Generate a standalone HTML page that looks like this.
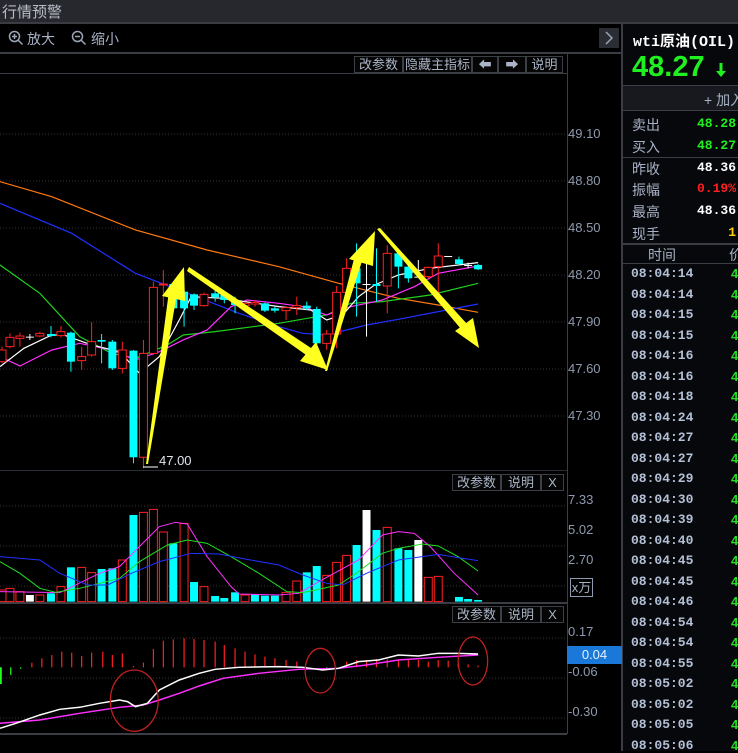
<!DOCTYPE html>
<html><head><meta charset="utf-8"><style>
*{margin:0;padding:0;box-sizing:border-box}
body{width:738px;height:751px;background:#000;overflow:hidden;position:relative;font-family:"Liberation Sans","Noto Sans CJK SC",sans-serif;color:#a8b2c4}
.a{position:absolute;white-space:nowrap}
.btn{position:absolute;height:17px;border:1px solid #3c3f46;font-size:13px;line-height:15px;text-align:center;color:#aab4c6;background:#050505}
.ax{position:absolute;left:568px;font-size:13px;color:#8f9aae}
.rl{position:absolute;left:632px;font-size:14px;color:#a8b2c6}
.rv{position:absolute;right:2px;font-size:13px;font-weight:bold;font-family:"Liberation Mono",monospace}
.t{position:absolute;left:631px;font-size:13px;font-weight:bold;color:#b4c0d6;font-family:"Liberation Mono",monospace;letter-spacing:0px}
.g4{position:absolute;left:731px;font-size:13px;font-weight:bold;color:#20e020}
</style></head><body>
<div class="a" style="left:0;top:0;width:738px;height:22px;background:#27282d"></div>
<div class="a" style="left:2px;top:1px;font-size:15px;color:#b8bcc6">行情预警</div>
<div class="a" style="left:0;top:22px;width:738px;height:2px;background:#3a3c42"></div>
<svg class="a" style="left:8px;top:30px" width="16" height="16" viewBox="0 0 16 16"><circle cx="6.5" cy="6.5" r="5" fill="none" stroke="#9aa4b6" stroke-width="1.5"/><path d="M10 10l4.5 4.5M4 6.5h5M6.5 4v5" stroke="#9aa4b6" stroke-width="1.5"/></svg>
<div class="a" style="left:27px;top:29px;font-size:14px;color:#a8b2c4">放大</div>
<svg class="a" style="left:71px;top:30px" width="16" height="16" viewBox="0 0 16 16"><circle cx="6.5" cy="6.5" r="5" fill="none" stroke="#9aa4b6" stroke-width="1.5"/><path d="M10 10l4.5 4.5M4 6.5h5" stroke="#9aa4b6" stroke-width="1.5"/></svg>
<div class="a" style="left:91px;top:29px;font-size:14px;color:#a8b2c4">缩小</div>
<div class="a" style="left:599px;top:28px;width:20px;height:20px;background:#2a2d33"></div>
<svg class="a" style="left:604px;top:31px" width="10" height="14"><path d="M2 1l6 6-6 6" fill="none" stroke="#9aa4b6" stroke-width="1.5"/></svg>
<div class="a" style="left:0;top:52px;width:622px;height:2px;background:#3a3d44"></div>
<div class="a" style="left:0;top:73px;width:567px;height:1px;background:#3a3d44"></div>
<div class="btn" style="left:354px;top:56px;width:49px">改参数</div>
<div class="btn" style="left:403px;top:56px;width:69px">隐藏主指标</div>
<div class="btn" style="left:472px;top:56px;width:26px">&#x2B05;</div>
<div class="btn" style="left:498px;top:56px;width:28px">&#x27A1;</div>
<div class="btn" style="left:526px;top:56px;width:37px">说明</div>
<div class="a" style="left:567px;top:54px;width:1px;height:680px;background:#3a3d44"></div>
<div class="a" style="left:621px;top:22px;width:2px;height:729px;background:#3a3d44"></div>
<div class="a" style="left:0;top:733px;width:567px;height:2px;background:#3a3d44"></div>
<div class="a" style="left:0;top:602px;width:567px;height:2px;background:#3a3d44"></div>
<div class="a" style="left:0;top:470px;width:567px;height:1px;background:#2a2d33"></div>

<svg class="a" style="left:0;top:0" width="567" height="751">
<g stroke="#333" stroke-dasharray="1,2" stroke-width="1">
<line x1="0" y1="134" x2="567" y2="134"/><line x1="0" y1="181" x2="567" y2="181"/><line x1="0" y1="228" x2="567" y2="228"/><line x1="0" y1="275" x2="567" y2="275"/><line x1="0" y1="322" x2="567" y2="322"/><line x1="0" y1="369" x2="567" y2="369"/><line x1="0" y1="416" x2="567" y2="416"/>
<line x1="0" y1="506" x2="567" y2="506"/><line x1="0" y1="546" x2="567" y2="546"/><line x1="0" y1="586" x2="567" y2="586"/>
<line x1="0" y1="638" x2="567" y2="638"/><line x1="0" y1="678" x2="567" y2="678"/><line x1="0" y1="718" x2="567" y2="718"/>
</g>
<g transform="translate(0,160) scale(0.3984,0.3333)">
<g fill="none" stroke-width="1.2">
<polyline vector-effect="non-scaling-stroke" stroke="#ff7a10" points="0,65 130,110 340,210 520,270 700,320 850,370 1000,415 1100,435 1200,457"/>
<polyline vector-effect="non-scaling-stroke" stroke="#2030ff" points="0,130 180,220 340,340 460,395 600,460 700,500 760,520 820,525 920,495 1000,478 1100,455 1200,432"/>
<polyline vector-effect="non-scaling-stroke" stroke="#20d020" points="0,315 100,400 200,530 280,580 340,595 420,555 460,525 540,515 700,490 820,465 880,430 960,425 1080,405 1200,370"/>
<polyline vector-effect="non-scaling-stroke" stroke="#ff30ff" points="0,590 50,618 130,570 200,550 280,570 340,600 400,575 460,540 520,510 580,440 620,420 700,430 760,440 820,465 880,440 960,420 1040,380 1100,340 1200,318"/>
<polyline vector-effect="non-scaling-stroke" stroke="#fff" points="0,620 60,565 130,525 160,525 230,555 300,575 350,640 400,590 450,480 480,410 560,415 700,440 780,450 820,480 860,465 900,410 940,375 1000,345 1080,325 1150,315 1200,308"/>
</g>
<g id="c"></g>
</g>
<g transform="translate(0,460) scale(0.3984,0.3333)">
<g id="v"></g>
<g fill="none">
<polyline vector-effect="non-scaling-stroke" stroke="#ff30ff" points="0,395 150,398 250,340 300,320 350,260 400,200 440,187 470,192 520,290 580,380 600,402 700,405 750,400 800,365 900,300 960,225 1000,215 1040,220 1080,260 1140,340 1200,405"/>
<polyline vector-effect="non-scaling-stroke" stroke="#20e020" points="0,305 50,340 100,385 140,397 200,385 300,355 350,305 420,255 470,240 520,250 580,290 650,340 720,395 760,398 850,375 900,335 960,280 1000,265 1060,252 1100,258 1150,290 1200,333"/>
<polyline vector-effect="non-scaling-stroke" stroke="#2030ff" points="0,290 100,300 150,340 220,375 270,375 330,340 400,305 480,280 550,282 620,298 700,315 760,345 820,370 860,375 920,340 1000,300 1060,290 1100,283 1150,293 1200,302"/>
</g>
<g id="m"></g>
<g fill="none">
<polyline vector-effect="non-scaling-stroke" stroke="#ff30ff" stroke-width="1.5" points="0,790 100,780 200,760 300,742 360,735 400,720 450,700 500,678 560,655 650,640 750,628 850,625 920,615 1000,600 1100,592 1200,585"/>
<polyline vector-effect="non-scaling-stroke" stroke="#fff" stroke-width="1.5" points="0,805 40,790 100,765 150,748 200,742 250,730 300,720 320,725 340,740 370,730 400,690 450,660 500,640 540,628 600,622 700,620 760,622 810,630 850,625 900,605 950,600 1000,585 1050,588 1100,580 1150,580 1200,582"/>
<ellipse vector-effect="non-scaling-stroke" stroke="#c02020" stroke-width="1.3" cx="337" cy="722" rx="60" ry="92"/>
<ellipse vector-effect="non-scaling-stroke" stroke="#c02020" stroke-width="1.3" cx="804" cy="632" rx="38" ry="67"/>
<ellipse vector-effect="non-scaling-stroke" stroke="#c02020" stroke-width="1.3" cx="1187" cy="603" rx="37" ry="72"/>
</g>
</g>
<g fill="#ffff20">
<polygon points="146,464 148,464 177,293 169,291"/><polygon points="162,296 184,267 185,301"/>
<polygon points="187,271 189,267 314,350 309,357"/><polygon points="300,361 328,370 316,342"/>
<polygon points="325,371 327,371 363,258 355,255"/><polygon points="349,259 375,231 373,266"/>
<polygon points="377,229 380,228 467,324 461,329"/><polygon points="455,331 479,348 473,318"/>
</g>
<line x1="143" y1="467" x2="158" y2="467" stroke="#fff"/>
</svg>
<div class="a" style="left:159px;top:453px;font-size:13px;color:#e0e4ec">47.00</div>

<div class="ax" style="top:126px">49.10</div><div class="ax" style="top:173px">48.80</div><div class="ax" style="top:220px">48.50</div><div class="ax" style="top:267px">48.20</div><div class="ax" style="top:314px">47.90</div><div class="ax" style="top:361px">47.60</div><div class="ax" style="top:408px">47.30</div>
<div class="ax" style="top:492px">7.33</div><div class="ax" style="top:522px">5.02</div><div class="ax" style="top:552px">2.70</div>
<div class="a" style="left:570px;top:578px;width:23px;height:19px;border:1px solid #8f9aae;font-size:13px;color:#a8b2c4;line-height:17px;text-align:center">x万</div>
<div class="ax" style="top:624px">0.17</div><div class="ax" style="top:664px">-0.06</div><div class="ax" style="top:704px">-0.30</div>
<div class="a" style="left:567px;top:646px;width:55px;height:18px;background:#1a78d8;color:#e8f0ff;font-size:13px;text-align:center;line-height:18px">0.04</div>

<div class="btn" style="left:452px;top:474px;width:49px">改参数</div>
<div class="btn" style="left:501px;top:474px;width:40px">说明</div>
<div class="btn" style="left:541px;top:474px;width:23px">X</div>
<div class="btn" style="left:452px;top:606px;width:49px">改参数</div>
<div class="btn" style="left:501px;top:606px;width:40px">说明</div>
<div class="btn" style="left:541px;top:606px;width:23px">X</div>

<div class="a" style="left:623px;top:24px;width:115px;height:727px;background:#07080b"></div>
<div class="a" style="left:633px;top:30px;font-size:15px;font-weight:bold;color:#fff;font-family:'Liberation Mono','Noto Sans CJK SC',monospace">wti原油(OIL)</div>
<div class="a" style="left:632px;top:51px;font-size:29px;font-weight:bold;color:#20f020">48.27</div>
<svg class="a" style="left:715px;top:62px" width="12" height="16"><path d="M6 1v9" stroke="#20f020" stroke-width="3"/><path d="M1 9h10l-5 6z" fill="#20f020"/></svg>
<div class="a" style="left:623px;top:85px;width:115px;height:26px;background:#17191e;border-top:1px solid #3a3d44;border-bottom:1px solid #3a3d44"></div>
<div class="a" style="left:704px;top:90px;font-size:14px;color:#a8b2c4">+ 加入</div>
<div class="rl" style="top:115px">卖出</div><div class="rv" style="top:116px;color:#20f020">48.28</div>
<div class="rl" style="top:137px">买入</div><div class="rv" style="top:138px;color:#20f020">48.27</div>
<div class="a" style="left:623px;top:157px;width:115px;height:1px;background:#3a3d44"></div>
<div class="rl" style="top:159px">昨收</div><div class="rv" style="top:160px;color:#fff">48.36</div>
<div class="rl" style="top:180px">振幅</div><div class="rv" style="top:181px;color:#ff2020">0.19%</div>
<div class="rl" style="top:202px">最高</div><div class="rv" style="top:203px;color:#fff">48.36</div>
<div class="rl" style="top:224px">现手</div><div class="rv" style="top:225px;color:#ffd000">1</div>
<div class="a" style="left:623px;top:243px;width:115px;height:2px;background:#3a3d44"></div>
<div class="a" style="left:648px;top:245px;font-size:14px;color:#a8b2c6">时间</div>
<div class="a" style="left:729px;top:245px;font-size:14px;color:#a8b2c6">价</div>
<div class="a" style="left:623px;top:263px;width:115px;height:1px;background:#3a3d44"></div>
<div id="times"></div>
<script>
var c='',cd=[[5,570,605,560,610,'r'],[25,532,560,520,565,'r'],[50,528,535,518,560,'r'],[75,530,531,522,540,'w'],[100,520,528,515,532,'r'],[128,522,528,498,532,'c'],[153,515,527,498,532,'r'],[178,518,605,515,635,'c'],[205,590,602,560,630,'r'],[230,545,585,487,590,'r'],[255,540,545,522,610,'c'],[282,545,625,540,630,'c'],[307,570,625,545,640,'r'],[335,572,892,570,910,'c'],[360,580,892,540,925,'r'],[385,382,580,365,585,'r'],[410,372,375,330,440,'r'],[435,372,445,368,450,'c'],[462,395,445,390,500,'c'],[487,403,437,400,450,'c'],[512,403,437,398,440,'r'],[540,400,412,390,425,'c'],[563,405,420,400,430,'c'],[590,420,435,410,460,'c'],[615,430,437,425,445,'r'],[640,427,432,420,440,'r'],[665,430,452,428,456,'c'],[690,445,452,440,458,'c'],[718,443,452,440,480,'r'],[745,437,443,410,465,'r'],[770,437,445,425,450,'c'],[795,447,550,440,585,'c'],[820,522,550,510,570,'r'],[845,397,522,378,565,'r'],[870,325,397,295,400,'r'],[895,325,370,250,470,'c'],[920,372,373,290,530,'w'],[945,372,378,265,425,'c'],[972,280,378,255,460,'r'],[1000,280,320,275,385,'c'],[1025,320,355,315,368,'c'],[1050,350,351,300,352,'w'],[1075,322,350,320,355,'r'],[1100,288,320,250,400,'r'],[1125,288,289,288,290,'w'],[1152,298,312,290,315,'c'],[1175,315,316,308,325,'w'],[1200,315,328,312,330,'c']];
var col={r:'#ff2020',c:'#00ffff',w:'#ffffff'};
cd.forEach(function(d){var k=col[d[5]];c+='<line x1="'+d[0]+'" x2="'+d[0]+'" y1="'+d[3]+'" y2="'+d[4]+'" stroke="'+k+'" vector-effect="non-scaling-stroke"/>';var h=Math.max(d[2]-d[1],3);
if(d[5]=='r')c+='<rect x="'+(d[0]-10)+'" y="'+d[1]+'" width="20" height="'+h+'" fill="#000" stroke="'+k+'" stroke-width="1" vector-effect="non-scaling-stroke"/>';else if(d[5]=='w')c+='<rect x="'+(d[0]-10)+'" y="'+d[1]+'" width="20" height="3" fill="#fff"/>';else c+='<rect x="'+(d[0]-10)+'" y="'+d[1]+'" width="20" height="'+h+'" fill="'+k+'"/>';});
document.getElementById('c').innerHTML=c;
var vd=[[5,390,'r'],[25,385,'r'],[50,395,'r'],[75,405,'w'],[100,405,'r'],[128,400,'c'],[153,380,'r'],[178,322,'c'],[205,322,'r'],[230,338,'r'],[255,327,'c'],[282,325,'c'],[307,300,'r'],[335,165,'c'],[360,157,'r'],[385,148,'r'],[410,216,'r'],[435,250,'c'],[462,190,'r'],[487,366,'c'],[512,380,'r'],[540,408,'c'],[563,414,'c'],[590,397,'c'],[615,405,'r'],[640,403,'c'],[665,407,'c'],[690,407,'c'],[718,397,'r'],[745,363,'r'],[770,337,'c'],[795,318,'c'],[820,346,'r'],[845,307,'r'],[870,286,'r'],[895,255,'c'],[920,150,'w'],[945,210,'c'],[972,202,'r'],[1000,265,'c'],[1025,270,'c'],[1050,240,'w'],[1075,352,'r'],[1100,349,'r'],[1152,411,'c'],[1175,417,'c'],[1200,420,'c']];
var v='';vd.forEach(function(d){var k=col[d[2]];if(d[2]=='r')v+='<rect x="'+(d[0]-10)+'" y="'+d[1]+'" width="20" height="'+(425-d[1])+'" fill="#000" stroke="'+k+'" vector-effect="non-scaling-stroke"/>';else v+='<rect x="'+(d[0]-10)+'" y="'+d[1]+'" width="20" height="'+(425-d[1])+'" fill="'+k+'"/>';});
document.getElementById('v').innerHTML=v;
var md=[[80,608],[105,595],[130,585],[155,575],[180,578],[205,588],[230,578],[258,575],[282,585],[307,580],[335,618],[360,608],[385,567],[410,542],[435,538],[462,535],[487,537],[512,540],[540,545],[563,555],[590,565],[615,575],[640,583],[665,590],[690,595],[718,600],[745,605],[870,605],[895,600],[920,600],[945,597],[972,598],[1000,598],[1025,600],[1050,600],[1075,605],[1100,600],[1125,602],[1150,610],[1175,613],[1200,617]];
var m='';md.forEach(function(d){m+='<line x1="'+d[0]+'" x2="'+d[0]+'" y1="'+d[1]+'" y2="622" stroke="#ff2020" stroke-width="1.2" vector-effect="non-scaling-stroke"/>';});
m+='<line x1="2" x2="2" y1="622" y2="672" stroke="#20ff20" stroke-width="2" vector-effect="non-scaling-stroke"/><line x1="27" x2="27" y1="622" y2="645" stroke="#20ff20" stroke-width="1.2" vector-effect="non-scaling-stroke"/><line x1="52" x2="52" y1="622" y2="627" stroke="#20ff20" vector-effect="non-scaling-stroke"/><line x1="820" x2="820" y1="622" y2="630" stroke="#20ff20" vector-effect="non-scaling-stroke"/>';
document.getElementById('m').innerHTML=m;
var ts=['08:04:14','08:04:14','08:04:15','08:04:15','08:04:16','08:04:16','08:04:18','08:04:24','08:04:27','08:04:27','08:04:29','08:04:30','08:04:39','08:04:40','08:04:45','08:04:45','08:04:46','08:04:54','08:04:54','08:04:55','08:05:02','08:05:02','08:05:05','08:05:06'],h='';
ts.forEach(function(t,i){var y=266+i*20.5;h+='<div class="t" style="top:'+y+'px">'+t+'</div><div class="g4" style="top:'+y+'px">4</div>';});
document.getElementById('times').innerHTML=h;
</script>
</body></html>
